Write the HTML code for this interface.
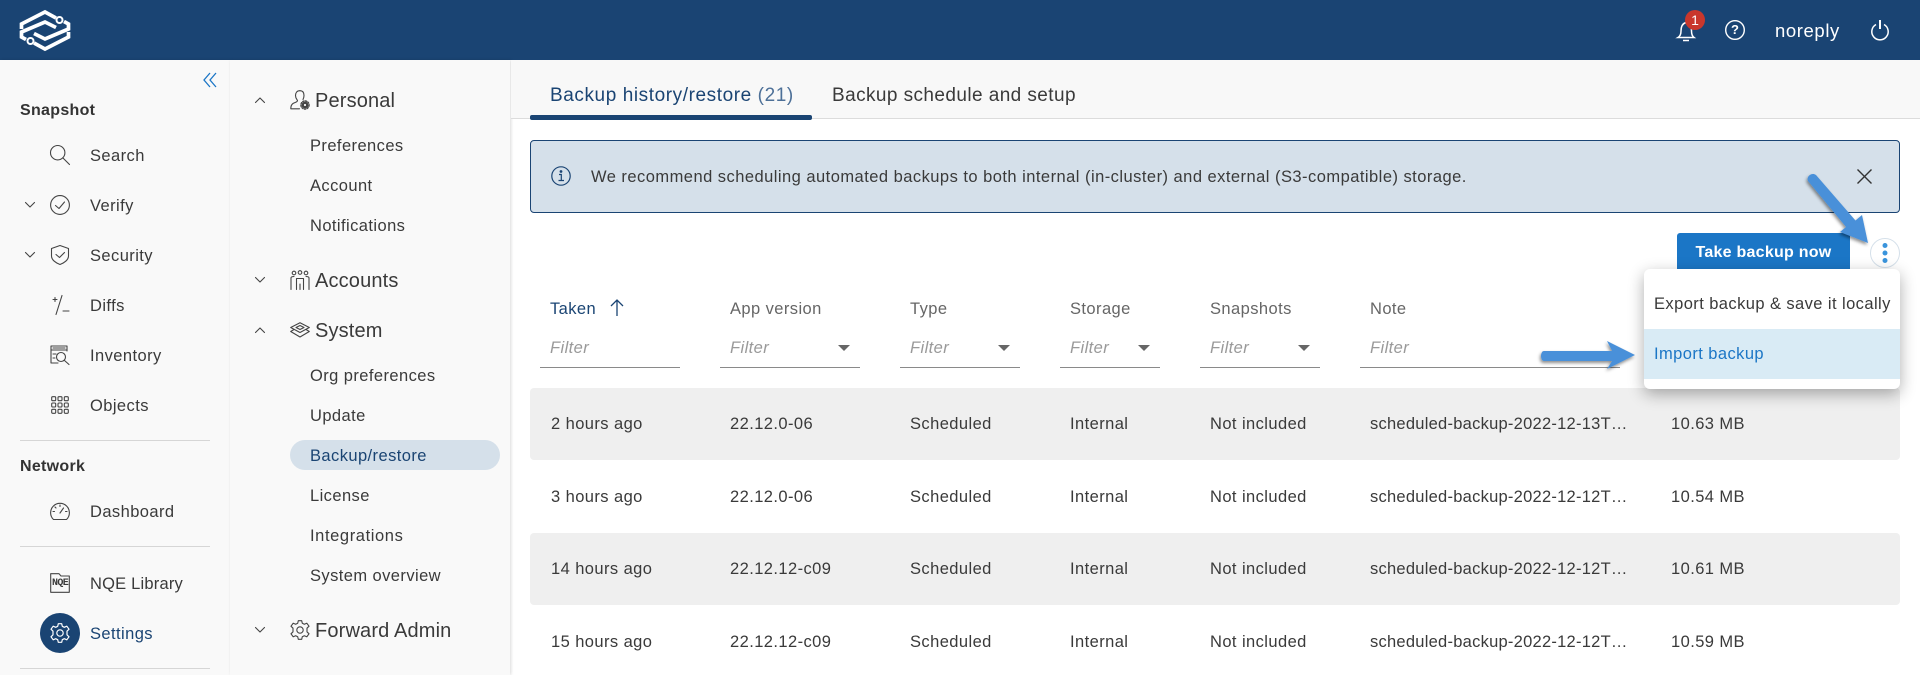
<!DOCTYPE html>
<html lang="en"><head><meta charset="utf-8"><title>Backup/restore</title>
<style>
*{box-sizing:border-box}
html,body{margin:0;padding:0;width:1920px;height:675px;overflow:hidden;background:#fff;font-family:"Liberation Sans",sans-serif;color:#333}
.a{position:absolute}
.t{position:absolute;white-space:nowrap;line-height:20px;height:20px;font-size:16.5px;letter-spacing:.42px;color:#3a3a3a;margin-top:1px}
.h{font-size:20px;line-height:24px;height:24px;letter-spacing:.15px}
.b{font-weight:bold;color:#333;letter-spacing:.3px;font-size:16px}
.th{color:#666}
.f{font-style:italic;color:#999}
.n{letter-spacing:.25px}
.tab{font-size:19px;letter-spacing:.42px}
.l{position:absolute;height:1px;background:#8a8a8a;top:367px}
.tri{position:absolute;top:345px;width:0;height:0;border-left:6.5px solid transparent;border-right:6.5px solid transparent;border-top:6.5px solid #666}
.row{position:absolute;left:530px;width:1370px;height:72px;background:#efefef;border-radius:4px}
.hr{position:absolute;left:20px;width:190px;height:1px;background:#d6d6d6}
svg{position:absolute;overflow:visible}
.ic{fill:none;stroke:#444;stroke-width:1.1;stroke-linecap:round;stroke-linejoin:round}
</style></head><body>

<div class="a" style="left:0;top:0;width:1920px;height:60px;background:#1a4473"></div>
<svg style="left:0;top:0" width="90" height="60" fill="none" stroke="#fff" stroke-width="3.7" stroke-linejoin="miter">
<g><path d="M21.5 29V24L45 12L56 18"/><path d="M64 21.5L68.5 24V29L45 39L34 33.5"/></g>
<g transform="rotate(180 45 30.5)"><path d="M21.5 29V24L45 12L56 18"/><path d="M64 21.5L68.5 24V29L45 39L34 33.5"/></g>
<circle cx="59.5" cy="20" r="3" stroke-width="2"/><circle cx="30.5" cy="41" r="3" stroke-width="2"/>
</svg>

<svg style="left:1675px;top:18px" width="24" height="24" fill="none" stroke="#fff" stroke-width="1.5"><path d="M3 19.5C5.5 18 6 16 6 13C6 9 7.5 5.500 11 4.500C14 5 16.500 8 16.500 13C16.500 16 17 18 19 19.500Z"/><path d="M8 22.500H14"/></svg>
<div class="a" style="left:1685px;top:10px;width:20px;height:20px;border-radius:50%;background:#c9372c"></div>
<div class="t" style="left:1685px;top:10px;width:20px;text-align:center;color:#fff;font-size:14px;letter-spacing:0;margin:0">1</div>
<svg style="left:1725px;top:20px" width="20" height="20" fill="none" stroke="#fff" stroke-width="1.4"><circle cx="10" cy="10" r="9.300"/></svg>
<div class="t b" style="left:1725px;top:20px;width:20px;text-align:center;color:#fff;font-size:13px;letter-spacing:0;margin:0">?</div>
<div class="t" style="left:1775px;top:20px;color:#fff;font-size:18.5px;letter-spacing:.6px">noreply</div>
<svg style="left:1871px;top:20px" width="18" height="20" fill="none" stroke="#fff" stroke-width="1.500"><path d="M5 4.500A8.200 8.200 0 1 0 13 4.500"/><path d="M9 0V9" stroke-width="2"/></svg>

<div class="a" style="left:0;top:60px;width:230px;height:615px;background:#f9f9f9;box-shadow:1px 0 3px rgba(0,0,0,.13)"></div>
<div class="a" style="left:230px;top:60px;width:280px;height:615px;background:#f9f9f9;box-shadow:1px 0 3px rgba(0,0,0,.15)"></div>
<div class="a" style="left:511px;top:60px;width:1409px;height:59px;background:#f8f8f8;border-bottom:1px solid #dcdcdc"></div>

<svg style="left:203px;top:72px" width="14" height="16" fill="none" stroke="#1b76c6" stroke-width="1.300"><path d="M7 1L1 8L7 15M13 1L7 8L13 15"/></svg>
<div class="t b" style="left:20px;top:100px">Snapshot</div>

<svg class="ic" style="left:50px;top:145px" width="20" height="20"><circle cx="7.700" cy="7.700" r="7.200"/><path d="M13 13L19.500 19.500"/></svg>
<div class="t" style="left:90px;top:145px">Search</div>
<svg class="ic" style="left:25px;top:201px" width="10" height="8"><path d="M.5 1.500L5 6L9.500 1.500"/></svg>
<svg class="ic" style="left:50px;top:195px" width="20" height="20"><circle cx="10" cy="10" r="9.400"/><path d="M5.500 10.500L9 13.500L14.500 7"/></svg>
<div class="t" style="left:90px;top:195px">Verify</div>
<svg class="ic" style="left:25px;top:251px" width="10" height="8"><path d="M.5 1.500L5 6L9.500 1.500"/></svg>
<svg class="ic" style="left:50px;top:245px" width="20" height="20"><path d="M10 .5L18.500 3.500V11C18.500 15 14 18 10 19.500C6 18 1.500 15 1.500 11V3.500Z"/><path d="M6 9.500L9.500 12.500L14.500 7.500"/></svg>
<div class="t" style="left:90px;top:245px">Security</div>
<svg class="ic" style="left:50px;top:295px" width="20" height="20"><path d="M3 4.500H7M5 2.500V6.500M12 .5L6 19.500M13 16H19"/></svg>
<div class="t" style="left:90px;top:295px">Diffs</div>
<svg class="ic" style="left:50px;top:345px" width="20" height="20"><path d="M17 6V1H1V18H8M1 5H17M3 3H15M3 9H6M3 13H5"/><circle cx="11" cy="12" r="4.500"/><path d="M14.500 15.500L19 19.500"/></svg>
<div class="t" style="left:90px;top:345px">Inventory</div>
<svg class="ic" style="left:51px;top:396px" width="18" height="18"><rect x=".7" y=".7" width="4" height="4" rx="1"/><rect x="7" y=".7" width="4" height="4" rx="1"/><rect x="13.300" y=".7" width="4" height="4" rx="1"/><rect x=".7" y="7" width="4" height="4" rx="1"/><rect x="7" y="7" width="4" height="4" rx="1"/><rect x="13.300" y="7" width="4" height="4" rx="1"/><rect x=".7" y="13.300" width="4" height="4" rx="1"/><rect x="7" y="13.300" width="4" height="4" rx="1"/><rect x="13.300" y="13.300" width="4" height="4" rx="1"/></svg>
<div class="t" style="left:90px;top:395px">Objects</div>
<div class="hr" style="top:440px"></div>
<div class="t b" style="left:20px;top:456px">Network</div>
<svg class="ic" style="left:50px;top:502px" width="20" height="18"><path d="M3.500 17.500A9.400 9.400 0 1 1 16.500 17.500Z"/><path d="M10 11L13.500 6M10 3V4.500M3 9.500H4.500M15.500 9.500H17M5 5L6 6"/></svg>
<div class="t" style="left:90px;top:501px">Dashboard</div>
<div class="hr" style="top:546px"></div>
<svg class="ic" style="left:50px;top:573px" width="20" height="20"><path d="M.7 19.300V.7H9L11 3H19.300V19.300Z"/></svg>
<div class="a" style="left:52px;top:578px;width:16px;height:12px;font:bold 10px/12px 'Liberation Mono',monospace;letter-spacing:-.6px;color:#3a3a3a">NQE</div>
<div class="t" style="left:90px;top:573px;letter-spacing:.2px">NQE Library</div>
<div class="a" style="left:40px;top:613px;width:40px;height:40px;border-radius:50%;background:#1a4473"></div>
<svg style="left:50px;top:623px" width="20" height="20" fill="none" stroke="#fff" stroke-width="1.200" stroke-linejoin="round"><path d="M8.300.7H11.700L12.300 3.300L14.300 4.300L16.800 3.200L19 6.200L17 8.200V11.800L19 13.800L16.800 16.800L14.300 15.700L12.300 16.700L11.700 19.300H8.300L7.700 16.700L5.700 15.700L3.200 16.800L1 13.800L3 11.800V8.200L1 6.200L3.200 3.200L5.700 4.300L7.700 3.300Z"/><circle cx="10" cy="10" r="3.200"/></svg>
<div class="t" style="left:90px;top:623px;color:#1a4473">Settings</div>
<div class="hr" style="top:668px"></div>

<svg class="ic" style="left:255px;top:96px" width="10" height="8"><path d="M.5 6.500L5 2L9.500 6.500"/></svg>
<svg class="ic" style="left:290px;top:90px" width="20" height="20"><path d="M10 .7C6.800 .7 5.500 3 5.500 5.500C5.500 8 6.500 9 7.500 10.500C7.500 12 5 12.500 3 13.500C1.500 14.500 .8 16.500 .8 18.800H9.500"/><path d="M10 .7C13 .7 14 3 14 5.500C14 7.500 13.500 8.500 13 9.500"/><circle cx="15" cy="15" r="3.400" fill="#444" stroke="none"/><circle cx="15" cy="15" r="4.100" fill="none" stroke-dasharray="1.400 1.400" stroke-width="1.300"/><circle cx="15" cy="15" r="1.100" fill="#f9f9f9" stroke="none"/></svg>
<div class="t h" style="left:315px;top:88px">Personal</div>
<div class="t" style="left:310px;top:135px">Preferences</div>
<div class="t" style="left:310px;top:175px">Account</div>
<div class="t" style="left:310px;top:215px">Notifications</div>
<svg class="ic" style="left:255px;top:276px" width="10" height="8"><path d="M.5 1.500L5 6L9.500 1.500"/></svg>
<svg class="ic" style="left:290px;top:270px" width="20" height="20"><circle cx="4" cy="3" r="1.800"/><circle cx="10" cy="2.500" r="1.800"/><circle cx="16" cy="3" r="1.800"/><path d="M6.500 19.500V8.500H13.500V19.500M10 14V19.500M1 19.500V8C1 7 2 6.500 4 6.500M19 19.500V8C19 7 18 6.500 16 6.500"/></svg>
<div class="t h" style="left:315px;top:268px">Accounts</div>
<svg class="ic" style="left:255px;top:326px" width="10" height="8"><path d="M.5 6.500L5 2L9.500 6.500"/></svg>
<svg class="ic" style="left:290px;top:322px" width="20" height="16"><path d="M.7 5.500L10 .7L19.300 5.500L10 10.500Z"/><path d="M4 7.500L.7 9.500L10 15L19.300 9.500L16 7.500"/><path d="M6 5.500L10 3.500L14 5.500L10 7.500Z"/></svg>
<div class="t h" style="left:315px;top:318px">System</div>
<div class="t" style="left:310px;top:365px">Org preferences</div>
<div class="t" style="left:310px;top:405px">Update</div>
<div class="a" style="left:290px;top:440px;width:210px;height:30px;border-radius:15px;background:#d5e0ea"></div>
<div class="t" style="left:310px;top:445px;color:#1a4473">Backup/restore</div>
<div class="t" style="left:310px;top:485px">License</div>
<div class="t" style="left:310px;top:525px;letter-spacing:.6px">Integrations</div>
<div class="t" style="left:310px;top:565px">System overview</div>
<svg class="ic" style="left:255px;top:626px" width="10" height="8"><path d="M.5 1.500L5 6L9.500 1.500"/></svg>
<svg class="ic" style="left:290px;top:620px" width="20" height="20"><path d="M8.300.7H11.700L12.300 3.300L14.300 4.300L16.800 3.200L19 6.200L17 8.200V11.800L19 13.800L16.800 16.800L14.300 15.700L12.300 16.700L11.700 19.300H8.300L7.700 16.700L5.700 15.700L3.200 16.800L1 13.800L3 11.800V8.200L1 6.200L3.200 3.200L5.700 4.300L7.700 3.300Z"/><circle cx="10" cy="10" r="3.200"/></svg>
<div class="t h" style="left:315px;top:618px">Forward Admin</div>

<div class="t tab" style="left:550px;top:85px;color:#1a4473;letter-spacing:.58px">Backup history/restore <span style="color:#4d7098">(21)</span></div>
<div class="a" style="left:530px;top:115px;width:282px;height:5px;background:#1a4473;border-radius:2px"></div>
<div class="t tab" style="left:832px;top:85px">Backup schedule and setup</div>

<div class="a" style="left:530px;top:140px;width:1370px;height:73px;background:#d5e0ea;border:1.500px solid #1a4473;border-radius:4px"></div>
<svg style="left:551px;top:166px" width="20" height="20" fill="none" stroke="#1a4473" stroke-width="1.200"><circle cx="10" cy="10" r="9.200"/><path d="M8 8.500H10.300V14.500M7.500 14.500H13"/><circle cx="10" cy="5.500" r=".8" fill="#1a4473"/></svg>
<div class="t" style="left:591px;top:166px;letter-spacing:.465px">We recommend scheduling automated backups to both internal (in-cluster) and external (S3-compatible) storage.</div>
<svg style="left:1856px;top:168px" width="18" height="18" fill="none" stroke="#333" stroke-width="1.400"><path d="M1.500 1.500L15.500 15.500M15.500 1.500L1.500 15.500"/></svg>

<div class="a" style="left:1677px;top:233px;width:173px;height:40px;background:#1b76c6;border-radius:3px"></div>
<div class="t" style="left:1677px;top:243px;width:173px;text-align:center;color:#fff;font-weight:bold;font-size:16px;letter-spacing:.25px;margin:0">Take backup now</div>
<div class="a" style="left:1870px;top:238px;width:30px;height:30px;border-radius:50%;background:#fff;border:1px solid #d5e0ea"></div>
<svg style="left:1880px;top:242px" width="10" height="22" fill="#3a94dc"><circle cx="5" cy="3.500" r="2.500"/><circle cx="5" cy="11" r="2.500"/><circle cx="5" cy="18.500" r="2.500"/></svg>

<div class="t th" style="left:550px;top:298px;color:#1a4473">Taken</div>
<svg style="left:609px;top:298px" width="16" height="20" fill="none" stroke="#1a4473" stroke-width="1.300"><path d="M8 18V2M2 8L8 2L14 8"/></svg>
<div class="t th" style="left:730px;top:298px">App version</div>
<div class="t th" style="left:910px;top:298px">Type</div>
<div class="t th" style="left:1070px;top:298px">Storage</div>
<div class="t th" style="left:1210px;top:298px">Snapshots</div>
<div class="t th" style="left:1370px;top:298px">Note</div>

<div class="t f" style="left:550px;top:337px">Filter</div><div class="l" style="left:540px;width:140px"></div>
<div class="t f" style="left:730px;top:337px">Filter</div><div class="l" style="left:720px;width:140px"></div><div class="tri" style="left:838px"></div>
<div class="t f" style="left:910px;top:337px">Filter</div><div class="l" style="left:900px;width:120px"></div><div class="tri" style="left:998px"></div>
<div class="t f" style="left:1070px;top:337px">Filter</div><div class="l" style="left:1060px;width:100px"></div><div class="tri" style="left:1138px"></div>
<div class="t f" style="left:1210px;top:337px">Filter</div><div class="l" style="left:1200px;width:120px"></div><div class="tri" style="left:1298px"></div>
<div class="t f" style="left:1370px;top:337px">Filter</div><div class="l" style="left:1360px;width:260px"></div>

<div class="row" style="top:388px"></div>
<div class="row" style="top:533px"></div>

<div class="t" style="left:551px;top:413px">2 hours ago</div><div class="t" style="left:730px;top:413px">22.12.0-06</div><div class="t" style="left:910px;top:413px">Scheduled</div><div class="t" style="left:1070px;top:413px">Internal</div><div class="t" style="left:1210px;top:413px">Not included</div><div class="t n" style="left:1370px;top:413px">scheduled-backup-2022-12-13T…</div><div class="t" style="left:1671px;top:413px">10.63 MB</div>
<div class="t" style="left:551px;top:486px">3 hours ago</div><div class="t" style="left:730px;top:486px">22.12.0-06</div><div class="t" style="left:910px;top:486px">Scheduled</div><div class="t" style="left:1070px;top:486px">Internal</div><div class="t" style="left:1210px;top:486px">Not included</div><div class="t n" style="left:1370px;top:486px">scheduled-backup-2022-12-12T…</div><div class="t" style="left:1671px;top:486px">10.54 MB</div>
<div class="t" style="left:551px;top:558px">14 hours ago</div><div class="t" style="left:730px;top:558px">22.12.12-c09</div><div class="t" style="left:910px;top:558px">Scheduled</div><div class="t" style="left:1070px;top:558px">Internal</div><div class="t" style="left:1210px;top:558px">Not included</div><div class="t n" style="left:1370px;top:558px">scheduled-backup-2022-12-12T…</div><div class="t" style="left:1671px;top:558px">10.61 MB</div>
<div class="t" style="left:551px;top:631px">15 hours ago</div><div class="t" style="left:730px;top:631px">22.12.12-c09</div><div class="t" style="left:910px;top:631px">Scheduled</div><div class="t" style="left:1070px;top:631px">Internal</div><div class="t" style="left:1210px;top:631px">Not included</div><div class="t n" style="left:1370px;top:631px">scheduled-backup-2022-12-12T…</div><div class="t" style="left:1671px;top:631px">10.59 MB</div>

<div class="a" style="left:1644px;top:269px;width:256px;height:120px;background:#fff;border-radius:6px;box-shadow:0 5px 16px rgba(0,0,0,.32)"></div>
<div class="a" style="left:1644px;top:329px;width:256px;height:50px;background:#d9ebf5"></div>
<div class="t" style="left:1654px;top:293px">Export backup &amp; save it locally</div>
<div class="t" style="left:1654px;top:343px;color:#1b76c6">Import backup</div>

<svg style="left:0;top:0;pointer-events:none" width="1920" height="675">
<defs><filter id="s" x="-30%" y="-30%" width="160%" height="160%"><feDropShadow dx="-1" dy="2" stdDeviation="1.500" flood-color="#000" flood-opacity=".45"/></filter></defs>
<g filter="url(#s)" fill="#4a90d9">
<path d="M1808 181C1806 176 1812 172 1816 175L1855.500 220.500L1862 215L1868 243L1840 232L1846 227Z"/>
<path d="M1544 351H1612L1607 341L1635 355L1607 369L1612 361H1544C1540 361 1540 351 1544 351Z"/>
</g></svg>
</body></html>
